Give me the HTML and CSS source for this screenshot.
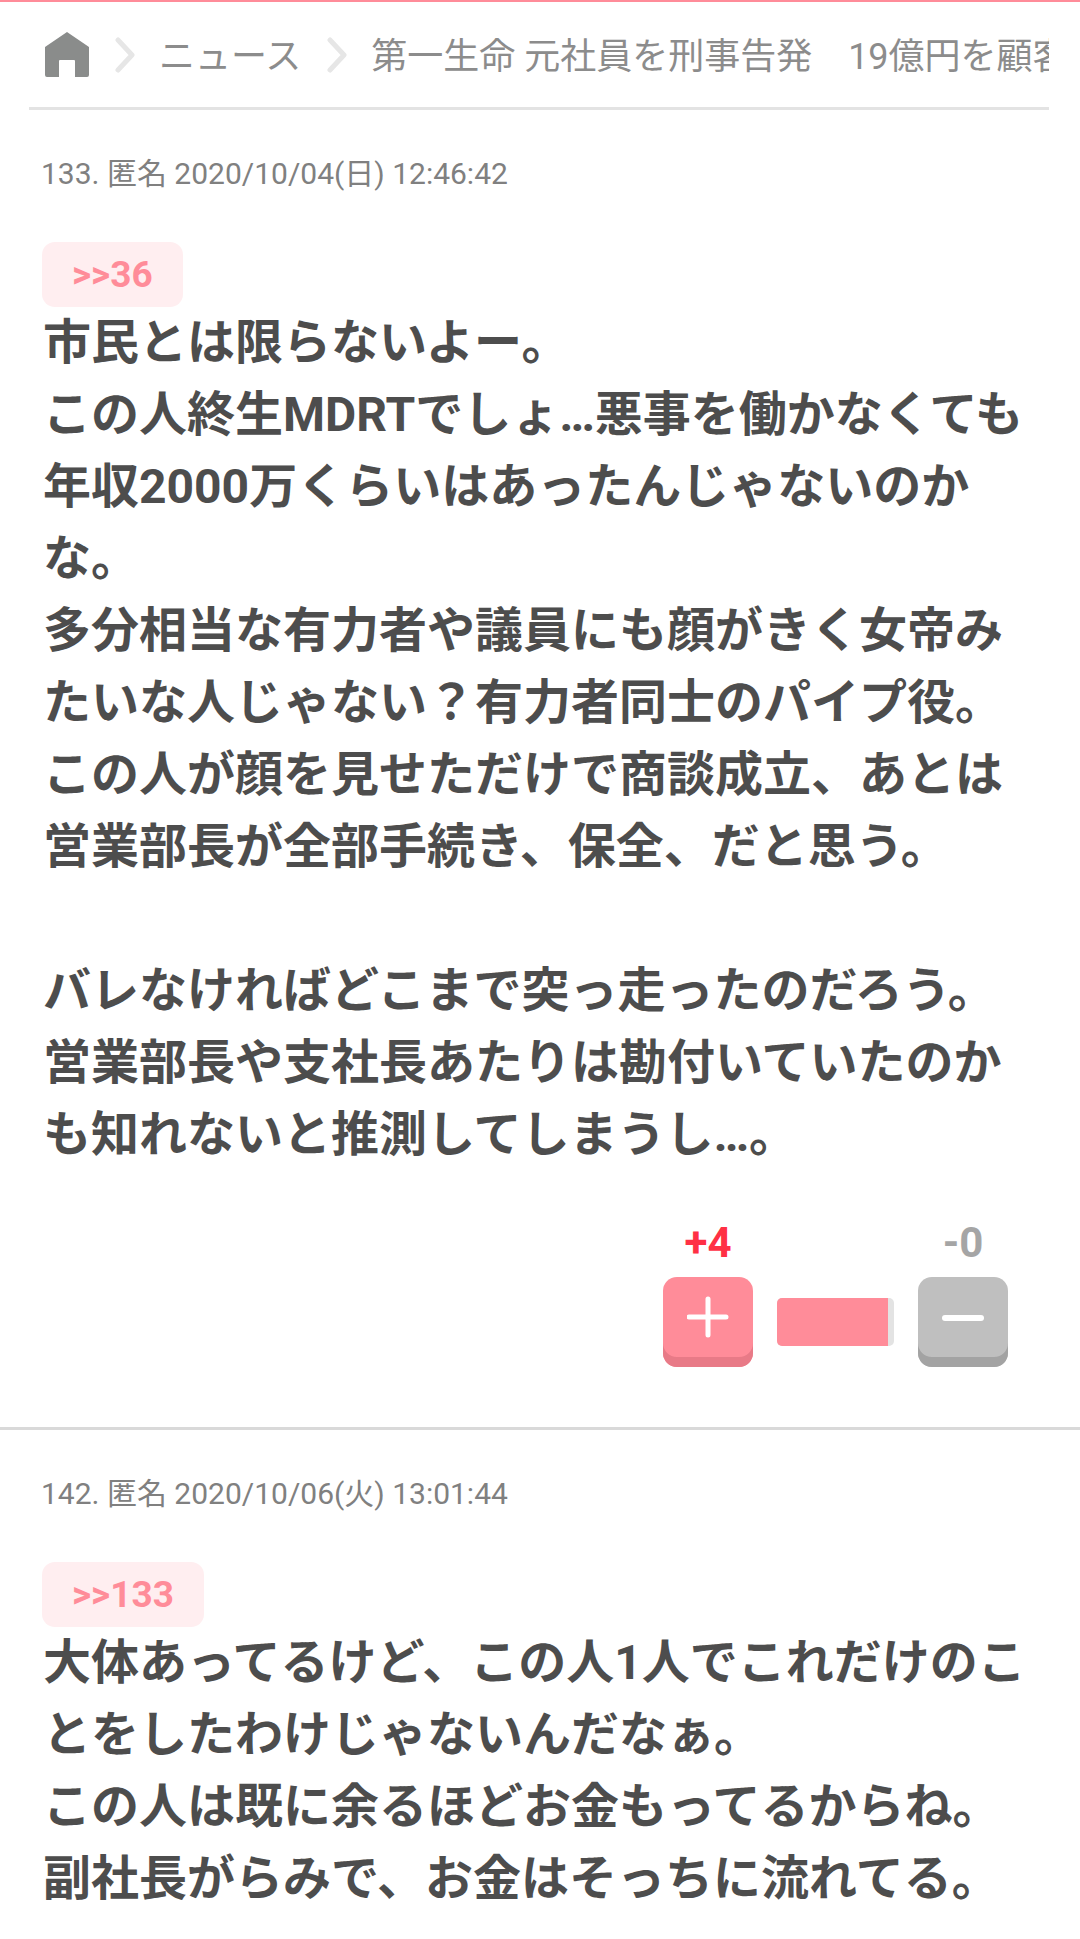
FILE: index.html
```html
<!doctype html>
<html lang="ja">
<head>
<meta charset="utf-8">
<title>第一生命 元社員を刑事告発</title>
<link rel="stylesheet" href="styles.css">
</head>
<body>

<nav class="crumbs">
	<svg class="home" width="44" height="45" viewBox="0 0 44 45"><path fill="#8a8c8b" d="M22 0 L44 15 V43 Q44 45 42 45 H30 V29 Q30 28 29 28 H15 Q14 28 14 29 V45 H2 Q0 45 0 43 V15 Z"/></svg>
	<svg class="chev" width="20" height="36" viewBox="0 0 20 36"><path fill="none" stroke="#e6e6e6" stroke-width="5" stroke-linecap="round" stroke-linejoin="round" d="M3 3 L17 18 L3 33"/></svg>
	<span class="crumb">ニュース</span>
	<svg class="chev" width="20" height="36" viewBox="0 0 20 36"><path fill="none" stroke="#e6e6e6" stroke-width="5" stroke-linecap="round" stroke-linejoin="round" d="M3 3 L17 18 L3 33"/></svg>
	<span class="crumb">第一生命 元社員を刑事告発　19億円を顧客</span>
</nav>

<section class="comment">
	<div class="meta">133. 匿名 2020/10/04(日) 12:46:42</div>
	<a class="anchor">&gt;&gt;36</a>
	<p class="body">市民とは限らないよー。<br>
	この人終生MDRTでしょ…悪事を働かなくても<br>
	年収2000万くらいはあったんじゃないのか<br>
	な。<br>
	多分相当な有力者や議員にも顔がきく女帝み<br>
	たいな人じゃない？有力者同士のパイプ役。<br>
	この人が顔を見せただけで商談成立、あとは<br>
	営業部長が全部手続き、保全、だと思う。<br>
	<br>
	バレなければどこまで突っ走ったのだろう。<br>
	営業部長や支社長あたりは勘付いていたのか<br>
	も知れないと推測してしまうし…。</p>
	<div class="votes">
		<div class="vote">
			<span class="count plus">+4</span>
			<button class="btn btn-plus"><svg width="42" height="42" viewBox="0 0 42 42"><path fill="none" stroke="#fff" stroke-width="5" stroke-linecap="round" d="M21 3 V39 M2 21 H39"/></svg></button>
		</div>
		<div class="bar"><div class="fill" style="width:95%"></div></div>
		<div class="vote">
			<span class="count minus">-0</span>
			<button class="btn btn-minus"><svg width="42" height="42" viewBox="0 0 42 42"><path fill="none" stroke="#fff" stroke-width="6" stroke-linecap="round" d="M3 22 H39"/></svg></button>
		</div>
	</div>
</section>

<section class="comment">
	<div class="meta">142. 匿名 2020/10/06(火) 13:01:44</div>
	<a class="anchor">&gt;&gt;133</a>
	<p class="body">大体あってるけど、この人1人でこれだけのこ<br>
	とをしたわけじゃないんだなぁ。<br>
	この人は既に余るほどお金もってるからね。<br>
	副社長がらみで、お金はそっちに流れてる。</p>
</section>

</body>
</html>
```

FILE: styles.css
```css
html, body {
	height: 1939px;
	overflow: hidden;
}
body {
	margin: 0;
	background: #fff;
	border-top: 2px solid #ff8c99;
	box-sizing: border-box;
	font-family: Roboto, "Noto Sans CJK JP", sans-serif;
	color: #4d4d4d;
}

.crumbs {
	display: flex;
	align-items: center;
	height: 105px;
	margin: 0 31px 0 29px;
	padding-left: 15px;
	border-bottom: 3px solid #e3e3e3;
	overflow: hidden;
	white-space: nowrap;
	box-sizing: content-box;
}
.home {
	flex: none;
	margin-right: 26px;
	margin-left: 1px;
}
.chev {
	flex: none;
	margin-right: 24px;
}
.crumb {
	flex: none;
	margin-right: 26px;
	margin-bottom: 3px;
	font-size: 36px;
	color: #8c8c8c;
}

.comment {
	padding: 0 0 0 42px;
	border-bottom: 3px solid #d9d9d9;
}
.comment:last-child {
	border-bottom: 0;
}
.meta {
	margin-left: -1px;
	padding-top: 44px;
	font-size: 30px;
	line-height: 40px;
	color: #808080;
}
.anchor {
	display: inline-block;
	margin-top: 48px;
	padding: 0 30px;
	height: 65px;
	line-height: 65px;
	border-radius: 13px;
	background: #ffeef0;
	color: #ff8c99;
	font-size: 37px;
	font-weight: bold;
	vertical-align: top;
}
.body {
	margin: 0 0 0 1px;
	font-size: 48px;
	line-height: 72px;
	font-weight: bold;
	white-space: nowrap;
}

.votes {
	display: flex;
	align-items: flex-end;
	justify-content: flex-end;
	gap: 24px;
	margin-top: 47px;
	padding: 0 72px 60px 0;
}
.vote {
	display: flex;
	flex-direction: column;
	align-items: center;
}
.count {
	font-size: 42px;
	line-height: 50px;
	font-weight: bold;
	margin-bottom: 9px;
}
.plus {
	color: #ff3044;
}
.minus {
	color: #a5a5a5;
}
.btn {
	display: flex;
	align-items: center;
	justify-content: center;
	width: 90px;
	height: 90px;
	padding: 0 0 10px;
	border: 0;
	border-radius: 14px;
}
.btn-plus {
	background: #ff8c99;
	box-shadow: inset 0 -10px 0 #e87a87;
}
.btn-minus {
	background: #bfbfbf;
	box-shadow: inset 0 -10px 0 #a3a3a3;
}
.bar {
	width: 117px;
	height: 48px;
	margin-bottom: 21px;
	border-radius: 5px;
	background: #e3e3e3;
	overflow: hidden;
}
.fill {
	height: 100%;
	background: #ff8c99;
}
```
